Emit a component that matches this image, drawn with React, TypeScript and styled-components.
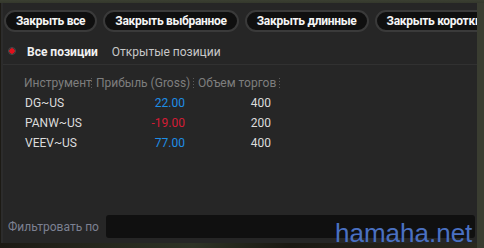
import React from 'react';
import styled, { createGlobalStyle } from 'styled-components';

const GlobalStyle = createGlobalStyle`
  html, body {
    margin: 0;
    padding: 0;
    background: #2a2c24;
  }
  body {
    font-family: Roboto, 'Noto Sans', sans-serif;
  }
`;

interface Position {
  symbol: string;
  profit: number;
  volume: number;
}

const positions: Position[] = [
  { symbol: 'DG~US', profit: 22, volume: 400 },
  { symbol: 'PANW~US', profit: -19, volume: 200 },
  { symbol: 'VEEV~US', profit: 77, volume: 400 },
];

const actions = ['Закрыть все', 'Закрыть выбранное', 'Закрыть длинные', 'Закрыть короткие'];

export default function App() {
  return (
    <>
      <GlobalStyle />
      <Backdrop>
        <Panel>
          <Toolbar>
            {actions.map((label) => (
              <PillButton key={label}>{label}</PillButton>
            ))}
          </Toolbar>

          <Tabs>
            <Radio />
            <Tab active>Все позиции</Tab>
            <Tab>Открытые позиции</Tab>
          </Tabs>

          <Grid>
            <HeadCell>Инструмент</HeadCell>
            <Sep />
            <HeadCell>Прибыль (Gross)</HeadCell>
            <Sep />
            <HeadCell>Объем торгов</HeadCell>
            <Sep />
            {positions.map((p) => (
              <React.Fragment key={p.symbol}>
                <Cell>{p.symbol}</Cell>
                <span />
                <Cell align="right" tone={p.profit < 0 ? 'loss' : 'gain'}>
                  {p.profit.toFixed(2)}
                </Cell>
                <span />
                <Cell align="right">{p.volume}</Cell>
                <span />
              </React.Fragment>
            ))}
          </Grid>

          <Filler />

          <FilterRow>
            <FilterLabel>Фильтровать по</FilterLabel>
            <FilterInput />
          </FilterRow>
        </Panel>
        <Watermark>hamaha.net</Watermark>
      </Backdrop>
    </>
  );
}

const Backdrop = styled.div`
  position: relative;
  width: 484px;
  height: 248px;
  overflow: hidden;
  background:
    linear-gradient(180deg, #3b3f32 0px, #34382c 3px, transparent 3px),
    linear-gradient(90deg, transparent 477px, #3a3d31 477px),
    linear-gradient(90deg, #1c1a14 0%, #2e3326 40%, #1a1812 60%, #2c2a20 100%);
  padding: 3px 0 0 1px;
  box-sizing: border-box;
`;

const Panel = styled.div`
  width: 476px;
  height: 240px;
  background: #262626;
  border-left: 2px solid #2c2c2c;
  box-sizing: border-box;
  display: flex;
  flex-direction: column;
  overflow: hidden;
`;

const Toolbar = styled.div`
  display: flex;
  gap: 6px;
  padding: 7px 0 0 1px;
  height: 29px;
  box-sizing: border-box;
  overflow: hidden;
`;

const PillButton = styled.button`
  flex: none;
  height: 22px;
  padding: 0 10px;
  border-radius: 11px;
  border: 2px solid #3a3a3a;
  background: #0f0f0f;
  color: #f6f6f6;
  font-family: Roboto, 'Noto Sans', sans-serif;
  font-size: 12px;
  font-weight: 700;
  letter-spacing: -0.3px;
  line-height: 18px;
  white-space: nowrap;
`;

const Tabs = styled.div`
  display: flex;
  align-items: center;
  height: 33px;
  padding: 8px 0 0 5px;
  border-bottom: 1px solid #313131;
  box-sizing: border-box;
`;

const Radio = styled.span`
  width: 8px;
  height: 8px;
  border-radius: 50%;
  border: 1px solid #4a4a4a;
  background: radial-gradient(circle, #e0101c 0 2.5px, #2a2a2a 3px);
  box-sizing: border-box;
  margin: -3px 11px 0 0;
`;

const Tab = styled.span<{ active?: boolean }>`
  font-size: 12px;
  font-weight: ${(p) => (p.active ? 700 : 400)};
  color: ${(p) => (p.active ? '#f2f2f2' : '#c8c8c8')};
  margin-right: 14px;
`;

const Grid = styled.div`
  display: grid;
  grid-template-columns: 66px 6px 96px 6px 80px 6px;
  grid-auto-rows: 20px;
  padding: 8px 0 0 19px;
  align-items: center;
`;

const HeadCell = styled.span`
  font-size: 12px;
  color: #7e7e7e;
  white-space: nowrap;
  padding-left: 2px;
`;

const Sep = styled.span`
  justify-self: center;
  width: 1px;
  height: 10px;
  background: repeating-linear-gradient(180deg, #5a5a5a 0 1px, transparent 1px 3px);
`;

const Cell = styled.span<{ align?: 'left' | 'right'; tone?: 'gain' | 'loss' }>`
  font-size: 12px;
  white-space: nowrap;
  text-align: ${(p) => p.align ?? 'left'};
  color: ${(p) => (p.tone === 'gain' ? '#1e8ee6' : p.tone === 'loss' ? '#d41c35' : '#dcdcdc')};
  padding: ${(p) => (p.align === 'right' ? '0 5px 0 0' : '0 0 0 3px')};
`;

const Filler = styled.div`
  flex: 1;
`;

const FilterRow = styled.div`
  display: flex;
  align-items: center;
  gap: 7px;
  padding: 0 2px 5px 5px;
`;

const FilterLabel = styled.span`
  font-size: 12px;
  color: #7c8192;
  white-space: nowrap;
`;

const FilterInput = styled.div`
  flex: 1;
  height: 23px;
  background: #101010;
  border-radius: 3px;
`;

const Watermark = styled.span`
  position: absolute;
  left: 335px;
  top: 218px;
  font-family: 'Liberation Sans', Arial, sans-serif;
  font-size: 26px;
  color: #4a70c2;
  line-height: 30px;
  pointer-events: none;
`;
